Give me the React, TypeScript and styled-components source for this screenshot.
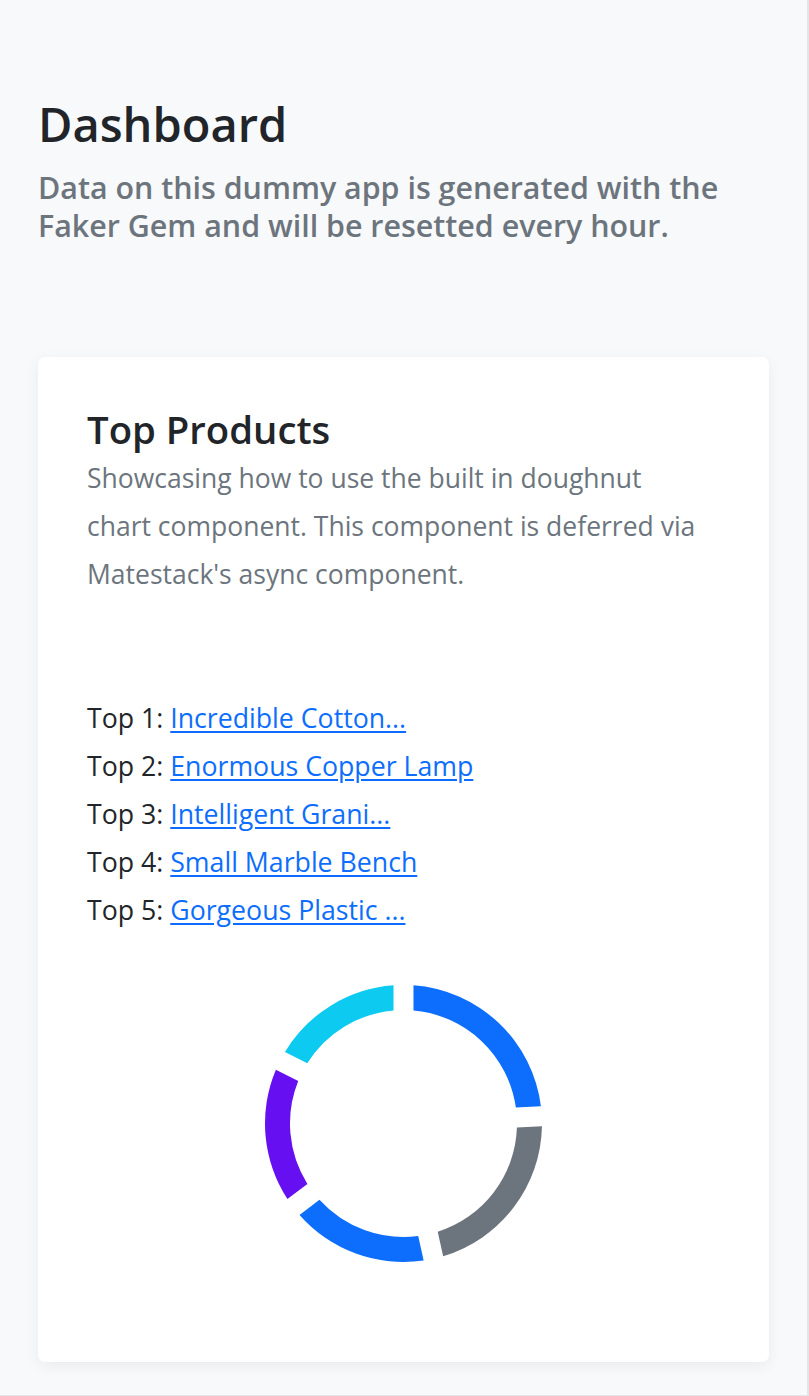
import React from "react";
import styled, { createGlobalStyle } from "styled-components";

const GlobalStyle = createGlobalStyle`
  html, body {
    margin: 0;
    padding: 0;
    background: #f8f9fa;
  }
  body {
    font-family: "Open Sans", "Noto Sans", sans-serif;
    color: #212529;
  }
  * { box-sizing: border-box; }
`;

const Page = styled.div`
  min-height: 1396px;
  background: #f8f9fa;
  border-right: 2px solid #e4e5e6;
  border-bottom: 1px solid #e4e5e6;
  padding: 98px 38px 32px 38px;
`;

const Header = styled.header`
  display: flex;
  flex-direction: column;
`;

const Title = styled.h1`
  margin: 0;
  font-size: 47px;
  line-height: 52px;
  font-weight: 600;
  color: #212529;
`;

const Subtitle = styled.p`
  margin: 19px 0 0 0;
  font-size: 30.4px;
  line-height: 38px;
  font-weight: 600;
  color: #6c757d;
`;

const Card = styled.section`
  margin-top: 112px;
  background: #ffffff;
  border-radius: 7px;
  box-shadow: 0 0.25rem 0.9rem rgba(0, 0, 0, 0.06);
  height: 1005px;
  width: 731px;
  padding: 51px 49px 0 49px;
  display: flex;
  flex-direction: column;
`;

const CardTitle = styled.h2`
  margin: 0;
  font-size: 38.3px;
  line-height: 42px;
  font-weight: 600;
  color: #212529;
`;

const Description = styled.p`
  margin: 4px 0 0 0;
  max-width: 620px;
  font-size: 26.5px;
  line-height: 48px;
  font-weight: 400;
  color: #6c757d;
`;

const List = styled.ul`
  list-style: none;
  margin: 96px 0 0 0;
  padding: 0;
`;

const Item = styled.li`
  font-size: 26.7px;
  line-height: 48px;
  color: #212529;
`;

const ProductLink = styled.a`
  color: #0d6efd;
  text-decoration: underline;
  text-underline-offset: 3px;
`;

const ChartWrap = styled.div`
  margin-top: 49px;
  display: flex;
  justify-content: center;
`;

const products = [
  "Incredible Cotton...",
  "Enormous Copper Lamp",
  "Intelligent Grani...",
  "Small Marble Bench",
  "Gorgeous Plastic ...",
];

const segments = [
  { from: 0, to: 87, color: "#0d6efd" },
  { from: 87, to: 167.5, color: "#6c757d" },
  { from: 167.5, to: 232.8, color: "#0d6efd" },
  { from: 232.8, to: 297, color: "#6610f2" },
  { from: 297, to: 360, color: "#0dcaf0" },
];

const SIZE = 281;
const C = SIZE / 2;
const R = 138.5;
const RI = 113.5;
const HALF_GAP = 10;

function pt(r: number, deg: number): [number, number] {
  const a = (deg * Math.PI) / 180;
  return [C + r * Math.sin(a), C - r * Math.cos(a)];
}

function arcPath(from: number, to: number): string {
  const oOff = (HALF_GAP / R) * (180 / Math.PI);
  const iOff = (HALF_GAP / RI) * (180 / Math.PI);
  const o0 = pt(R, from + oOff);
  const o1 = pt(R, to - oOff);
  const i0 = pt(RI, from + iOff);
  const i1 = pt(RI, to - iOff);
  const largeO = to - from - 2 * oOff > 180 ? 1 : 0;
  const largeI = to - from - 2 * iOff > 180 ? 1 : 0;
  return [
    `M ${o0[0]} ${o0[1]}`,
    `A ${R} ${R} 0 ${largeO} 1 ${o1[0]} ${o1[1]}`,
    `L ${i1[0]} ${i1[1]}`,
    `A ${RI} ${RI} 0 ${largeI} 0 ${i0[0]} ${i0[1]}`,
    "Z",
  ].join(" ");
}

function Doughnut() {
  return (
    <svg width={SIZE} height={SIZE} viewBox={`0 0 ${SIZE} ${SIZE}`}>
      {segments.map((s, i) => (
        <path key={i} d={arcPath(s.from, s.to)} fill={s.color} />
      ))}
    </svg>
  );
}

export default function App() {
  return (
    <>
      <GlobalStyle />
      <Page>
        <Header>
          <Title>Dashboard</Title>
          <Subtitle>
            Data on this dummy app is generated with the Faker Gem and will be
            resetted every hour.
          </Subtitle>
        </Header>
        <Card>
          <CardTitle>Top Products</CardTitle>
          <Description>
            Showcasing how to use the built in doughnut chart component. This
            component is deferred via Matestack's async component.
          </Description>
          <List>
            {products.map((p, i) => (
              <Item key={i}>
                Top {i + 1}: <ProductLink href="#">{p}</ProductLink>
              </Item>
            ))}
          </List>
          <ChartWrap>
            <Doughnut />
          </ChartWrap>
        </Card>
      </Page>
    </>
  );
}
